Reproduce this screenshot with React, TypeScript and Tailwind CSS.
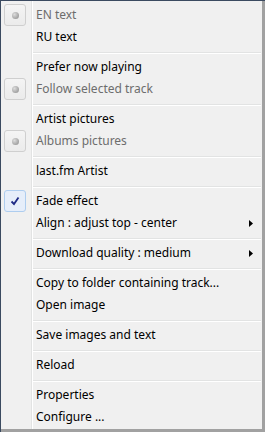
import type { ReactNode } from "react";

type Item = {
  label: string;
  disabled?: boolean;
  mark?: "radio" | "check";
  sub?: boolean;
};

type Entry = Item | "sep";

const entries: Entry[] = [
  { label: "EN text", disabled: true, mark: "radio" },
  { label: "RU text" },
  "sep",
  { label: "Prefer now playing" },
  { label: "Follow selected track", disabled: true, mark: "radio" },
  "sep",
  { label: "Artist pictures" },
  { label: "Albums pictures", disabled: true, mark: "radio" },
  "sep",
  { label: "last.fm Artist" },
  "sep",
  { label: "Fade effect", mark: "check" },
  { label: "Align : adjust top - center", sub: true },
  "sep",
  { label: "Download quality : medium", sub: true },
  "sep",
  { label: "Copy to folder containing track..." },
  { label: "Open image" },
  "sep",
  { label: "Save images and text" },
  "sep",
  { label: "Reload" },
  "sep",
  { label: "Properties" },
  { label: "Configure ..." },
];

function Row({ h, gutter, children }: { h: string; gutter?: ReactNode; children?: ReactNode }) {
  return (
    <div className={`flex ${h}`}>
      <div className="w-[30px] pl-[3px] flex items-center">{gutter}</div>
      <div className="w-px bg-[#e2e3e3]" />
      <div className="w-px bg-white" />
      <div className="flex-1 flex flex-col">{children}</div>
    </div>
  );
}

function Radio() {
  return (
    <div className="w-[22px] h-[22px] rounded-[3px] border border-[#cfcfcf] bg-gradient-to-b from-[#f4f4f4] to-[#ebebeb] flex items-center justify-center">
      <div className="w-[7px] h-[7px] rounded-full bg-[radial-gradient(circle_at_35%_35%,#dcdcdc,#a2a2a2_70%,#8e8e8e)]" />
    </div>
  );
}

function Check() {
  return (
    <div className="w-[22px] h-[22px] rounded-[3px] border border-[#aecdef] bg-[#e6eefa] flex items-center justify-center">
      <svg width="10" height="10" viewBox="0 0 10 10">
        <path d="M1.5 5.5 L4 8 L8.5 1.5" fill="none" stroke="#1f2b86" strokeWidth="1.8" />
      </svg>
    </div>
  );
}

export default function App() {
  return (
    <div className="w-[265px] h-[432px] bg-[#3b4a60] pt-px pl-px flex font-['Noto_Sans',sans-serif] text-[12px] leading-none">
      <div className="flex-1 flex flex-col bg-[#f0f0f0] border-r-[3px] border-b-[3px] border-[#a1a1a1]">
        <Row h="h-[3px]" />
        {entries.map((e, i) =>
          e === "sep" ? (
            <Row key={i} h="h-[8px]">
              <div className="h-[4px]" />
              <div className="h-px bg-[#e2e3e3] mr-[1px]" />
              <div className="h-px bg-white mr-[1px]" />
            </Row>
          ) : (
            <Row
              key={i}
              h="h-[22px]"
              gutter={e.mark === "radio" ? <Radio /> : e.mark === "check" ? <Check /> : null}
            >
              <div
                className={`flex-1 flex items-center pl-[3px] pr-[9px] ${
                  e.disabled ? "text-[#6d6d6d]" : "text-black"
                }`}
              >
                <span className="flex-1">{e.label}</span>
                {e.sub && (
                  <svg width="4" height="7" viewBox="0 0 4 7">
                    <path d="M0 0 L4 3.5 L0 7Z" fill="#000" />
                  </svg>
                )}
              </div>
            </Row>
          )
        )}
        <Row h="flex-1" />
      </div>
    </div>
  );
}
